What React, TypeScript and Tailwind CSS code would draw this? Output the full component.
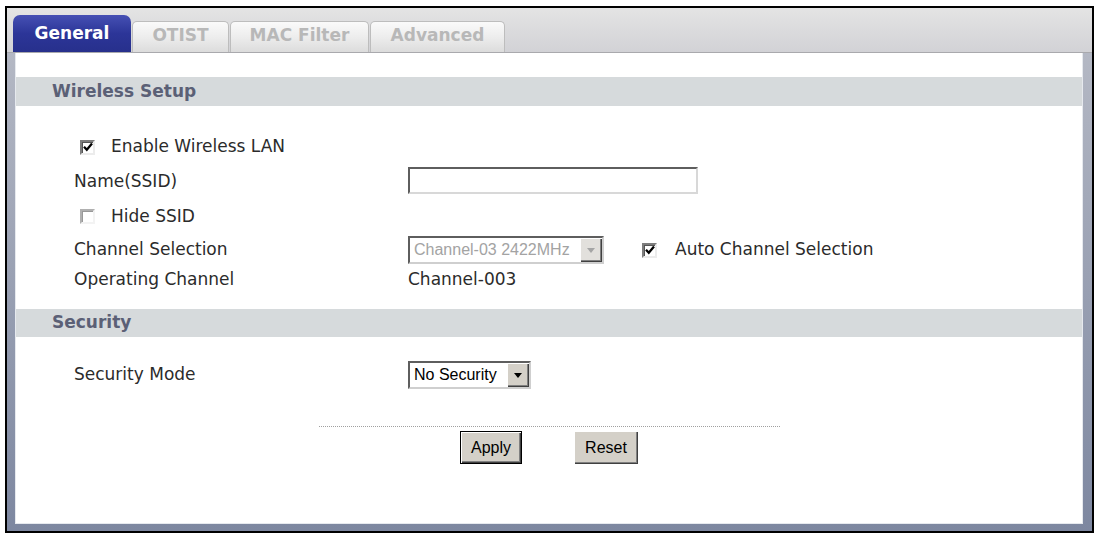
import React from 'react'

const LABEL = "font-['DejaVu_Sans',Verdana,sans-serif] text-[17px] text-[#2b2b2b]"
const ARIAL = "font-['Liberation_Sans',Arial,sans-serif] text-[16px]"

function Checkbox({ checked }: { checked: boolean }) {
  return (
    <span
      className={`w-[15px] h-[15px] shrink-0 flex items-center justify-center bg-white border-2 border-t-[#7d7d7d] border-l-[#7d7d7d] border-b-[#ececec] border-r-[#ececec] shadow-[inset_1px_1px_#555555] ${
        checked ? '' : 'opacity-60'
      }`}
    >
      {checked && (
        <svg width="10" height="10" viewBox="0 0 10 10" className="block">
          <path d="M1 4.8 L3.8 7.8 L9 1.6" fill="none" stroke="#000" strokeWidth="2.3" />
        </svg>
      )}
    </span>
  )
}

function Arrow({ color }: { color: string }) {
  return (
    <svg width="8" height="5" viewBox="0 0 8 5" className="block">
      <path d="M0 0 H8 L4 5 Z" fill={color} />
    </svg>
  )
}

function Select({ value, width, disabled }: { value: string; width: string; disabled?: boolean }) {
  return (
    <div
      className={`${width} h-[28px] flex items-stretch bg-white border-2 border-t-[#5e5e5e] border-l-[#5e5e5e] border-b-[#cfcfcf] border-r-[#cfcfcf]`}
    >
      <span className={`flex-1 flex items-center pl-[4px] whitespace-nowrap ${ARIAL} ${disabled ? 'text-[#a3a3a3]' : 'text-black'}`}>
        {value}
      </span>
      <span
        className={`w-[22px] flex items-center justify-center ${
          disabled ? 'bg-[#e2e0dc]' : 'bg-[#d4d0c8]'
        } shadow-[inset_1px_1px_#ffffff,inset_-1px_-1px_#404040,inset_-2px_-2px_#808080]`}
      >
        <Arrow color={disabled ? '#a5a5a5' : '#000'} />
      </span>
    </div>
  )
}

function Tab({ label, active, width }: { label: string; active?: boolean; width: string }) {
  if (active) {
    return (
      <div
        className={`${width} h-[37px] rounded-t-[7px] bg-gradient-to-b from-[#4650b4] via-[#2c3598] to-[#27308c] flex items-center justify-center font-['DejaVu_Sans',Verdana,sans-serif] font-bold text-[17px] text-white`}
      >
        {label}
      </div>
    )
  }
  return (
    <div
      className={`${width} h-[31px] rounded-t-[5px] border border-b-0 border-[#bdbdbd] bg-gradient-to-b from-[#fafafa] via-[#ededed] to-[#dcdcdc] flex items-center justify-center pb-[3px] font-['DejaVu_Sans',Verdana,sans-serif] font-bold text-[17px] text-[#b8b8b8]`}
    >
      {label}
    </div>
  )
}

function SectionBar({ title, className }: { title: string; className: string }) {
  return (
    <div className={`${className} bg-[#d6dadc] flex items-center pl-[36px] font-['DejaVu_Sans',Verdana,sans-serif] font-bold text-[17px] text-[#5b6076]`}>
      {title}
    </div>
  )
}

export default function App() {
  return (
    <div className="w-[1095px] h-[535px] bg-white pt-[6px] pl-[5px]">
      <div className="w-[1089px] h-[527px] border-2 border-black flex flex-col">
        {/* Tabs */}
        <div className="h-[44px] shrink-0 bg-gradient-to-b from-[#e4e4e4] to-[#d2d2d6] flex items-end gap-[1px] pl-[6px]">
          <Tab label="General" active width="w-[118px]" />
          <Tab label="OTIST" width="w-[97px]" />
          <Tab label="MAC Filter" width="w-[139px]" />
          <Tab label="Advanced" width="w-[135px]" />
        </div>

        {/* Panel */}
        <div className="flex-1 flex flex-col border-t border-[#a9a9ad] bg-gradient-to-b from-[#b4b8c4] to-[#7d87a0] pl-[8px] pr-[9px] pb-[7px]">
          <div className="flex-1 flex flex-col bg-white border-l border-r border-b border-[#e6e9ee]">
            <SectionBar title="Wireless Setup" className="mt-[24px] h-[29px]" />

            <div className="mt-[24px] h-[34px] flex items-center pl-[64px] gap-[16px]">
              <Checkbox checked />
              <span className={LABEL}>Enable Wireless LAN</span>
            </div>

            <div className="h-[35px] flex items-center pl-[58px]">
              <span className={`${LABEL} w-[334px]`}>Name(SSID)</span>
              <div className="w-[290px] h-[27px] -mt-[3px] bg-white border-2 border-t-[#5e5e5e] border-l-[#5e5e5e] border-b-[#d8d8d8] border-r-[#d8d8d8]" />
            </div>

            <div className="h-[35px] flex items-center pl-[64px] gap-[16px]">
              <Checkbox checked={false} />
              <span className={LABEL}>Hide SSID</span>
            </div>

            <div className="h-[32px] flex items-center pl-[58px]">
              <span className={`${LABEL} w-[334px]`}>Channel Selection</span>
              <Select value="Channel-03 2422MHz" width="w-[196px]" disabled />
              <div className="ml-[38px] flex items-center gap-[18px]">
                <Checkbox checked />
                <span className={LABEL}>Auto Channel Selection</span>
              </div>
            </div>

            <div className="h-[28px] flex items-center pl-[58px]">
              <span className={`${LABEL} w-[334px]`}>Operating Channel</span>
              <span className={LABEL}>Channel-003</span>
            </div>

            <SectionBar title="Security" className="mt-[15px] h-[28px]" />

            <div className="mt-[22px] h-[32px] flex items-center pl-[58px]">
              <span className={`${LABEL} w-[334px]`}>Security Mode</span>
              <Select value="No Security" width="w-[123px]" />
            </div>

            <div className="mt-[35px] flex justify-center">
              <div className="w-[461px] border-t border-dotted border-[#a0a0a0]" />
            </div>

            <div className="mt-[4px] flex justify-center gap-[52px]">
              <button
                className={`w-[62px] h-[33px] border border-black bg-[#d4d0c8] shadow-[inset_1px_1px_#ffffff,inset_-1px_-1px_#404040,inset_-2px_-2px_#808080] text-black ${ARIAL}`}
              >
                Apply
              </button>
              <button
                className={`w-[64px] h-[33px] bg-[#d4d0c8] shadow-[inset_1px_1px_#ffffff,inset_-1px_-1px_#404040,inset_-2px_-2px_#808080] text-black ${ARIAL}`}
              >
                Reset
              </button>
            </div>
          </div>
        </div>
      </div>
    </div>
  )
}
